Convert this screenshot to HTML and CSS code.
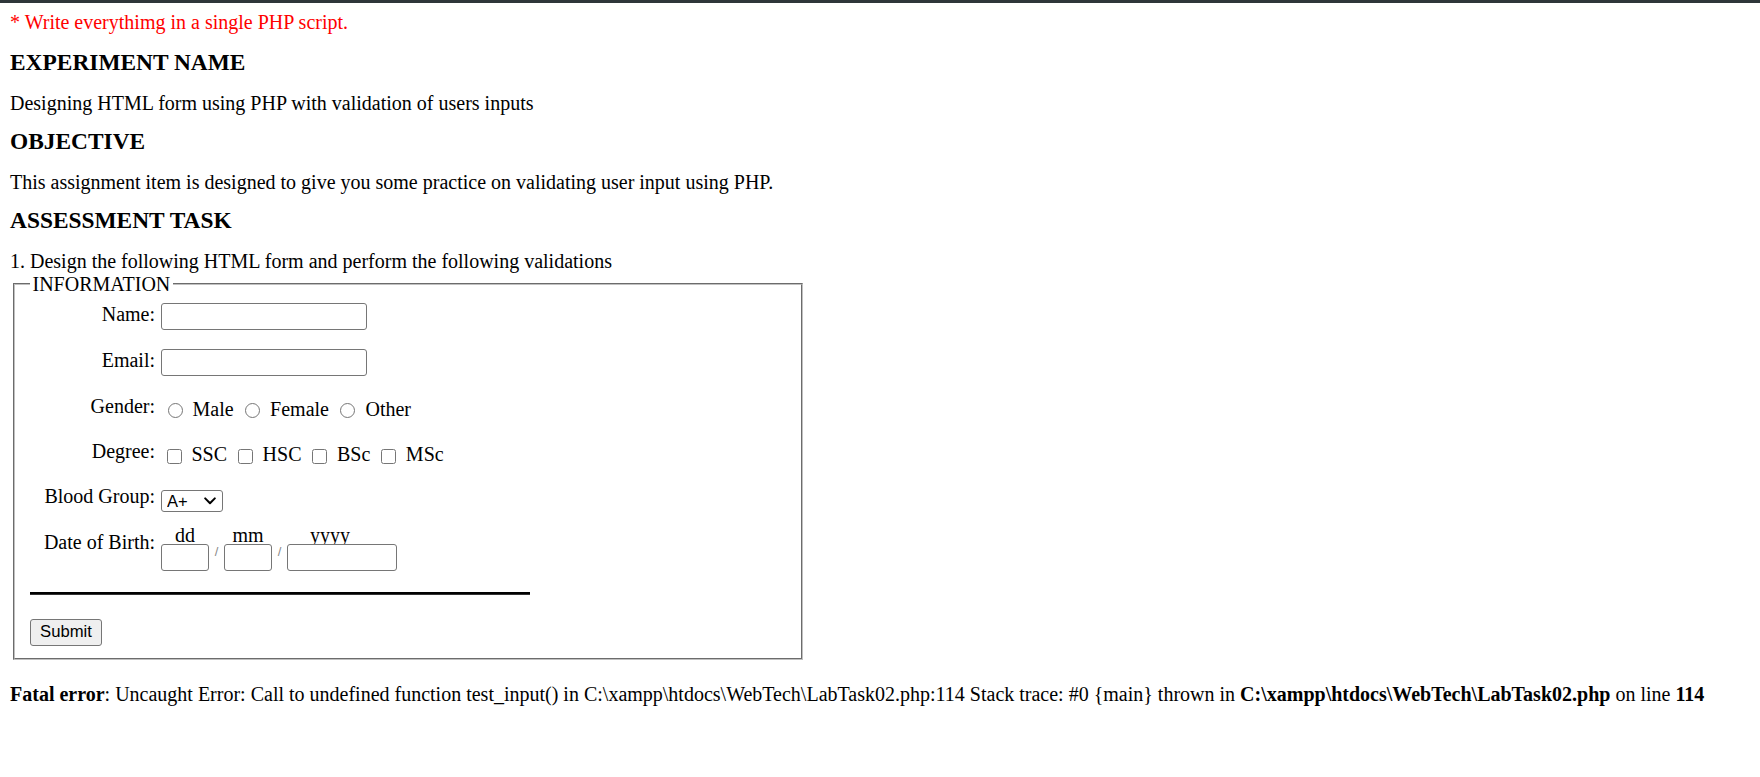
FILE: index.html
```html
<!DOCTYPE html>
<html>
<head>
<meta charset="utf-8">
<title>LabTask02</title>
<link rel="stylesheet" href="styles.css">
</head>
<body>
<div class="topbar"></div>
<main class="page">
  <p class="note">* Write everythimg in a single PHP script.</p>
  <h3>EXPERIMENT NAME</h3>
  <p>Designing HTML form using PHP with validation of users inputs</p>
  <h3>OBJECTIVE</h3>
  <p>This assignment item is designed to give you some practice on validating user input using PHP.</p>
  <h3>ASSESSMENT TASK</h3>
  <p>1. Design the following HTML form and perform the following validations</p>
  <form class="form" onsubmit="return false;">
    <fieldset class="info">
      <legend class="legend">INFORMATION</legend>
      <div class="rows">
        <div class="row">
          <label class="lbl">Name:</label>
          <input type="text" class="text">
        </div>
        <div class="row">
          <label class="lbl">Email:</label>
          <input type="text" class="text">
        </div>
        <div class="row">
          <label class="lbl">Gender:</label>
          <div class="opts opts-radio"><input type="radio" name="g" class="radio"> Male <input type="radio" name="g" class="radio"> Female <input type="radio" name="g" class="radio"> Other</div>
        </div>
        <div class="row">
          <label class="lbl">Degree:</label>
          <div class="opts opts-check"><input type="checkbox" class="check"> SSC <input type="checkbox" class="check"> HSC <input type="checkbox" class="check"> BSc <input type="checkbox" class="check"> MSc</div>
        </div>
        <div class="row">
          <label class="lbl">Blood Group:</label>
          <span class="selwrap">
            <select class="sel">
              <option>A+</option>
              <option>A-</option>
              <option>B+</option>
              <option>B-</option>
              <option>AB+</option>
              <option>AB-</option>
              <option>O+</option>
              <option>O-</option>
            </select>
            <svg class="chev" width="12" height="8" viewBox="0 0 12 8" aria-hidden="true"><polyline points="1.2,1.4 6,6.2 10.8,1.4" fill="none" stroke="#000" stroke-width="2" stroke-linecap="round" stroke-linejoin="round"/></svg>
          </span>
        </div>
        <div class="row">
          <label class="lbl">Date of Birth:</label>
          <div class="dob">
            <div class="dpart">
              <span class="dlabel">dd</span>
              <input type="text" class="dinput dinput-s">
            </div>
            <span class="slash">/</span>
            <div class="dpart">
              <span class="dlabel">mm</span>
              <input type="text" class="dinput dinput-s">
            </div>
            <span class="slash">/</span>
            <div class="dpart">
              <span class="dlabel dlabel-y">yyyy</span>
              <input type="text" class="dinput dinput-l">
            </div>
          </div>
        </div>
      </div>
      <hr class="rule">
      <button type="submit" class="submit">Submit</button>
    </fieldset>
  </form>
  <p class="fatal"><b>Fatal error</b>: Uncaught Error: Call to undefined function test_input() in C:\xampp\htdocs\WebTech\LabTask02.php:114 Stack trace: #0 {main} thrown in <b>C:\xampp\htdocs\WebTech\LabTask02.php</b> on line <b>114</b></p>
</main>
</body>
</html>
```

FILE: styles.css
```css
html, body {
  margin: 0;
  background: #fff;
}

body {
  font-family: "Liberation Serif", "Times New Roman", serif;
  font-size: 20px;
  line-height: 23px;
  color: #000;
}

.topbar {
  height: 3px;
  background: #2f363a;
}

.page {
  padding: 8px 10px 0;
}

p {
  margin: 0;
}

h3 {
  font-size: 23.4px;
  line-height: 27px;
  font-weight: bold;
  margin: 13.5px 0 15.5px;
}

.note {
  color: #f00;
  padding-bottom: 1.8px;
}

.form {
  margin: 0;
}

.info {
  box-sizing: border-box;
  width: 790px;
  margin: 0 0 0 3px;
  padding: 7px 15px 12.5px;
  border: 2px groove #c0c0c0;
  min-inline-size: min-content;
}

.legend {
  padding: 0 2.5px;
  line-height: 23px;
}

.rows {
  display: flex;
  flex-direction: column;
  gap: 19px;
}

.row {
  display: flex;
  align-items: flex-start;
}

.lbl {
  flex: none;
  width: 125px;
  padding-right: 6px;
  text-align: right;
}

.text {
  box-sizing: border-box;
  width: 206px;
  height: 27px;
  margin: 0;
  padding: 1px 3px;
  border: 1px solid #767676;
  border-radius: 3px;
  font: 16.5px "Liberation Sans", Arial, sans-serif;
  background: #fff;
}

.opts {
  white-space: nowrap;
}

.opts-radio {
  margin-top: 3px;
}

.opts-check {
  margin-top: 3.5px;
}

.radio {
  -webkit-appearance: none;
  appearance: none;
  box-sizing: border-box;
  display: inline-block;
  width: 15px;
  height: 15px;
  margin: 0 5px 0 6.5px;
  border: 1px solid #767676;
  border-radius: 50%;
  background: #fff;
  vertical-align: -2px;
}

.check {
  -webkit-appearance: none;
  appearance: none;
  box-sizing: border-box;
  display: inline-block;
  width: 15px;
  height: 15px;
  margin: 0 5px 0 5.5px;
  border: 1px solid #767676;
  border-radius: 2.5px;
  background: #fff;
  vertical-align: -3px;
}

.selwrap {
  position: relative;
  display: inline-block;
  height: 22px;
  margin-top: 5px;
}

.sel {
  -webkit-appearance: none;
  appearance: none;
  box-sizing: border-box;
  display: block;
  width: 62px;
  height: 22px;
  margin: 0;
  padding: 0 0 0 5px;
  border: 1px solid #767676;
  border-radius: 3px;
  font: 16.5px "Liberation Sans", Arial, sans-serif;
  line-height: 20px;
  color: #000;
  background: #fff;
}

.chev {
  position: absolute;
  left: 43px;
  top: 7px;
  pointer-events: none;
}

.dob {
  display: flex;
  align-items: flex-end;
  margin-top: -5.5px;
}

.dpart {
  display: flex;
  flex-direction: column;
  align-items: center;
}

.dlabel {
  line-height: 18px;
}

.dlabel-y {
  padding-right: 24px;
}

.dinput {
  box-sizing: border-box;
  height: 27px;
  margin: 0;
  padding: 1px 3px;
  border: 1px solid #767676;
  border-radius: 3px;
  font: 16.5px "Liberation Sans", Arial, sans-serif;
  background: #fff;
}

.dinput-s {
  width: 48px;
}

.dinput-l {
  width: 110px;
}

.slash {
  width: 15px;
  height: 27px;
  line-height: 27px;
  text-align: center;
  color: #8a8a8a;
  font: 13px "Liberation Sans", Arial, sans-serif;
}

.rule {
  width: 500px;
  height: 0;
  margin: 21px 0 0;
  border: 0;
  border-top: 2px solid #000;
  border-bottom: 1px solid #333;
}

.submit {
  display: block;
  box-sizing: border-box;
  width: 72px;
  height: 27px;
  margin: 24px 0 0;
  padding: 0;
  border: 1px solid #767676;
  border-radius: 3px;
  background: #efefef;
  color: #000;
  font: 16.67px "Liberation Sans", Arial, sans-serif;
}

.fatal {
  margin-top: 23px;
}
```
